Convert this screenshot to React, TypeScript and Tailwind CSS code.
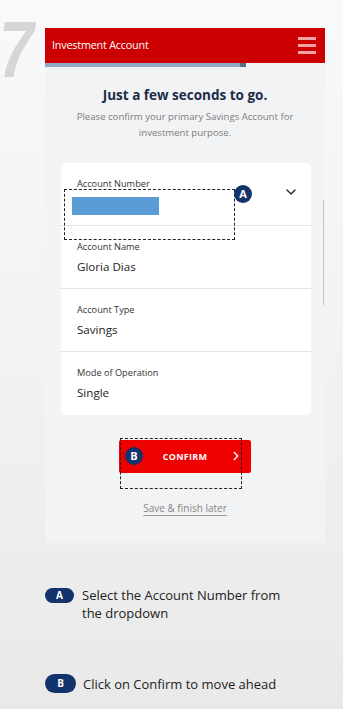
import { ChevronDown, ChevronRight } from "lucide-react";

const rows = [
  { label: "Account Name", value: "Gloria Dias" },
  { label: "Account Type", value: "Savings" },
  { label: "Mode of Operation", value: "Single" },
];

function Badge({ letter, className }: { letter: string; className: string }) {
  return (
    <div className={`absolute flex items-center justify-center rounded-full bg-[#12336b] text-white font-bold ${className}`}>
      {letter}
    </div>
  );
}

export default function App() {
  return (
    <div
      className="relative w-[343px] h-[709px] overflow-hidden bg-gradient-to-b from-[#f8f9fa] via-[#f1f2f3] to-[#e9e9e9]"
      style={{ fontFamily: '"Open Sans", "Noto Sans", sans-serif' }}
    >
      <div className="flex items-start pt-[28px]">
        <div className="w-[45px] -mt-[18px] overflow-visible">
          <div
            className="origin-left scale-x-[0.78] -ml-[1px] text-[80px] leading-[80px] font-bold italic text-[#d6d6d6]"
            style={{ fontFamily: '"Liberation Sans", Arial, sans-serif' }}
          >
            7
          </div>
        </div>

        <div className="relative w-[280px]">
          <div className="h-[35px] bg-[#cc0000] flex items-center justify-between pl-[7px] pr-[9px]">
            <span className="text-white text-[10.8px] tracking-[-0.2px]">Investment Account</span>
            <div className="flex flex-col gap-[4px]">
              <div className="w-[18px] h-[3px] bg-[#f7a3a3]" />
              <div className="w-[18px] h-[3px] bg-[#f7a3a3]" />
              <div className="w-[18px] h-[3px] bg-[#f7a3a3]" />
            </div>
          </div>

          <div className="h-[480px] bg-[#f2f3f5]">
            <div className="flex h-[4px]">
              <div className="w-[195px] bg-[#8fa8c4]" />
              <div className="w-[6px] bg-[#5c6b8c]" />
            </div>

            <h1 className="mt-[18px] text-center text-[13.5px] leading-[20px] font-bold text-[#1b2c47]">
              Just a few seconds to go.
            </h1>
            <p className="mt-[4px] px-[24px] text-center text-[9.6px] leading-[16px] text-[#7c7c7c]">
              Please confirm your primary Savings Account for investment purpose.
            </p>

            <div className="relative mt-[22px] ml-[16px] w-[250px] rounded-[5px] bg-white">
              <div className="relative h-[63px] border-b border-[#e3e4e6] pl-[16px] pt-[14px]">
                <div className="text-[9.2px] leading-[14px] text-[#333]">Account Number</div>
                <div className="mt-[6px] -ml-[5px] w-[87px] h-[18px] bg-[#5b9bd5]" />
                <ChevronDown className="absolute right-[12px] top-[21px] w-[16px] h-[16px] text-[#222]" strokeWidth={2} />
              </div>
              {rows.map((r, i) => (
                <div
                  key={r.label}
                  className={`h-[63px] pl-[16px] pt-[14px] ${i < rows.length - 1 ? "border-b border-[#e3e4e6]" : ""}`}
                >
                  <div className="text-[9.2px] leading-[14px] text-[#333]">{r.label}</div>
                  <div className="mt-[4px] text-[11.6px] leading-[18px] text-[#222]">{r.value}</div>
                </div>
              ))}
              <div className="absolute left-[3px] top-[26px] w-[171px] h-[51px] border border-dashed border-[#222]" />
              <Badge letter="A" className="left-[173px] top-[22px] w-[18px] h-[18px] text-[11px]" />
            </div>

            <div className="relative mx-auto mt-[25px] w-[132px] h-[33px] rounded-[2px] bg-[#ee0000] flex items-center justify-center">
              <span className="text-white text-[9px] font-bold tracking-[0.3px]">CONFIRM</span>
              <ChevronRight className="absolute right-[8px] top-[9px] w-[14px] h-[14px] text-white" strokeWidth={2.5} />
              <Badge letter="B" className="left-[6px] top-[7px] w-[18px] h-[18px] text-[11px]" />
              <div className="absolute left-[1px] -top-[2px] w-[122px] h-[51px] border border-dashed border-[#222]" />
            </div>

            <div className="mt-[21px] text-center">
              <span className="text-[10px] leading-[14px] text-[#858585] underline underline-offset-[3px] decoration-[#999]">
                Save &amp; finish later
              </span>
            </div>
          </div>

          <div className="absolute right-[1px] top-[172px] w-[1px] h-[105px] bg-[#c4c4c4]" />
        </div>
      </div>

      <div className="mt-[43px] pl-[45px]">
        <div className="flex items-start gap-[8px]">
          <div className="mt-[2px] w-[29px] h-[15px] rounded-full bg-[#12336b] text-white text-[10px] font-bold flex items-center justify-center shrink-0">
            A
          </div>
          <p className="w-[212px] text-[13px] leading-[18px] text-[#222]">Select the Account Number from the dropdown</p>
        </div>
        <div className="mt-[52px] flex items-center gap-[7px]">
          <div className="w-[31px] h-[19px] rounded-full bg-[#12336b] text-white text-[10px] font-bold flex items-center justify-center shrink-0">
            B
          </div>
          <p className="text-[13px] leading-[18px] text-[#222]">Click on Confirm to move ahead</p>
        </div>
      </div>
    </div>
  );
}
